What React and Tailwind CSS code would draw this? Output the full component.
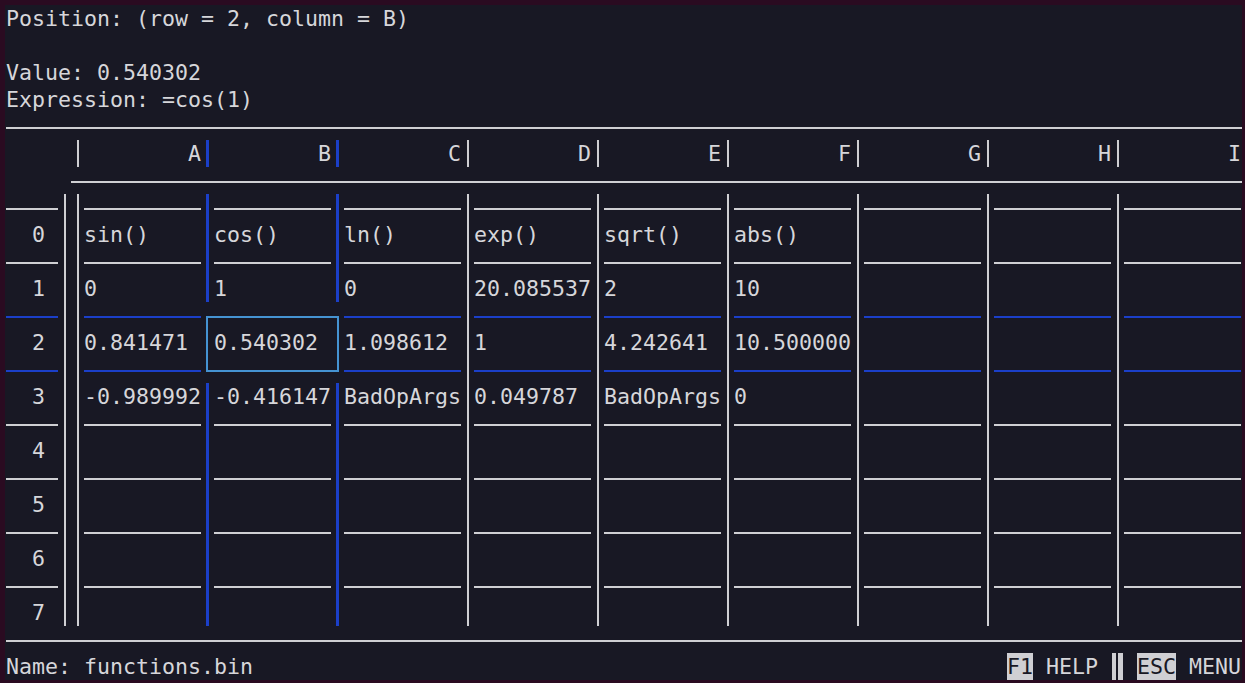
import React from 'react';

// terminal-like spreadsheet view: every line is 27px, every char cell 13px
const WHITE = 'bg-[#cfcfd3]';
const BLUE = 'bg-[#1b3fc8]';

const columns = ['A', 'B', 'C', 'D', 'E', 'F', 'G', 'H', 'I'];

const data = [
  ['sin()', 'cos()', 'ln()', 'exp()', 'sqrt()', 'abs()', '', '', ''],
  ['0', '1', '0', '20.085537', '2', '10', '', '', ''],
  ['0.841471', '0.540302', '1.098612', '1', '4.242641', '10.500000', '', '', ''],
  ['-0.989992', '-0.416147', 'BadOpArgs', '0.049787', 'BadOpArgs', '0', '', '', ''],
  ['', '', '', '', '', '', '', '', ''],
  ['', '', '', '', '', '', '', '', ''],
  ['', '', '', '', '', '', '', '', ''],
  ['', '', '', '', '', '', '', '', ''],
];

const SEL_ROW = 2;
const SEL_COL = 1;

const Rule = ({ className = '' }) => (
  <div className={`h-[27px] pt-[14px] ${className}`}>
    <div className={`h-[2px] ${WHITE}`} />
  </div>
);

const SepLine = ({ blue }) => (
  <div className="h-[27px] pt-[14px]">
    <div className={`h-[2px] ${blue ? BLUE : WHITE}`} />
  </div>
);

const Stroke = ({ blue }) =>
  blue ? <div className={`ml-[5px] w-[3px] h-full ${BLUE}`} /> : <div className={`ml-[6px] w-[2px] h-full ${WHITE}`} />;

// vertical divider, one char wide, made of 16 line segments
const Bar = ({ blue, hidden = [] }) => (
  <div className="w-[13px] shrink-0 flex flex-col">
    {Array.from({ length: 16 }).map((_, i) => (
      <div key={i} className="h-[27px] flex">
        {!hidden.includes(i) && <Stroke blue={blue} />}
      </div>
    ))}
  </div>
);

const LabelColumn = () => (
  <div className="w-[52px] shrink-0 flex flex-col">
    {data.map((_, r) => (
      <React.Fragment key={r}>
        <SepLine blue={r === SEL_ROW || r === SEL_ROW + 1} />
        <div className="h-[27px] leading-[27px] text-right pr-[13px]">{r}</div>
      </React.Fragment>
    ))}
  </div>
);

const DataColumn = ({ c }) => (
  <div className="w-[117px] shrink-0 flex flex-col">
    {data.map((row, r) => (
      <React.Fragment key={r}>
        <SepLine blue={r === SEL_ROW || r === SEL_ROW + 1} />
        <div className="relative h-[27px] leading-[27px] whitespace-pre">
          {row[c]}
          {r === SEL_ROW && c === SEL_COL && (
            <div className="absolute -top-[13px] -bottom-[16px] -left-[8px] -right-[8px] border-2 border-[#4593d2] z-10" />
          )}
        </div>
      </React.Fragment>
    ))}
  </div>
);

const HeaderBar = ({ blue }) => (
  <div className="w-[13px] shrink-0 flex">
    <Stroke blue={blue} />
  </div>
);

export default function App() {
  return (
    <div className="h-[683px] w-full bg-[#2a0b21] pt-[5px] pl-[5px] pr-[3px] pb-[3px] overflow-hidden">
      <div
        className="h-[675px] bg-[#181824] text-[#d6d6da] text-[21.6px] pl-[1px] overflow-hidden"
        style={{ fontFamily: '"DejaVu Sans Mono", "Liberation Mono", monospace' }}
      >
        <div className="h-[27px] leading-[27px] whitespace-pre">Position: (row = 2, column = B)</div>
        <div className="h-[27px]" />
        <div className="h-[27px] leading-[27px] whitespace-pre">Value: 0.540302</div>
        <div className="h-[27px] leading-[27px] whitespace-pre">Expression: =cos(1)</div>
        <Rule />

        {/* column headers */}
        <div className="h-[27px] flex leading-[27px]">
          <div className="w-[65px] shrink-0" />
          <HeaderBar />
          {columns.map((col, i) => (
            <React.Fragment key={col}>
              <div className="w-[117px] shrink-0 text-right">{col}</div>
              <HeaderBar blue={i === SEL_COL - 1 || i === SEL_COL} />
            </React.Fragment>
          ))}
        </div>
        <Rule className="ml-[65px]" />

        {/* grid body */}
        <div className="flex">
          <LabelColumn />
          <Bar />
          <Bar />
          {columns.map((col, i) => (
            <React.Fragment key={col}>
              <DataColumn c={i} />
              <Bar
                blue={i === SEL_COL - 1 || i === SEL_COL}
                hidden={i === SEL_COL - 1 || i === SEL_COL ? [4, 5, 6] : []}
              />
            </React.Fragment>
          ))}
        </div>

        <Rule />

        {/* status line */}
        <div className="h-[27px] leading-[27px] flex justify-between whitespace-pre pr-[1px]">
          <span>Name: functions.bin</span>
          <div className="flex items-stretch">
            <span className="bg-[#cfcfd3] text-[#181824]">F1</span>
            <span> HELP </span>
            <span className="w-[13px] flex justify-center">
              <span className="w-[11px] bg-[#cfcfd3] flex justify-center">
                <span className="w-[2px] bg-[#181824]" />
              </span>
            </span>
            <span> </span>
            <span className="bg-[#cfcfd3] text-[#181824]">ESC</span>
            <span> MENU</span>
          </div>
        </div>
      </div>
    </div>
  );
}
